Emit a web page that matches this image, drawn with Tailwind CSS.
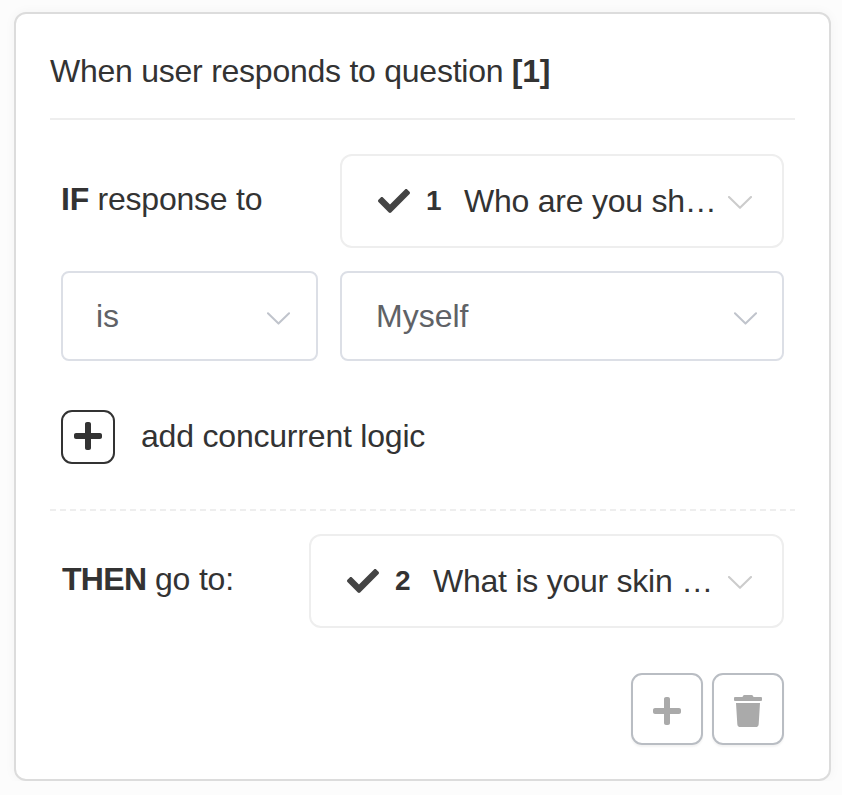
<!DOCTYPE html>
<html lang="en">
<head>
<meta charset="utf-8">
<title>Question logic</title>
<script src="https://cdn.jsdelivr.net/npm/@tailwindcss/browser@4"></script>
</head>
<body class="bg-[#fcfcfc] font-['Liberation_Sans',Arial,sans-serif] text-[32px] leading-[40px] text-[#333333] overflow-hidden">
<svg class="hidden">
  <symbol id="check" viewBox="0 0 512 512"><path d="M173.898 439.404l-166.4-166.4c-9.997-9.997-9.997-26.206 0-36.204l36.203-36.204c9.997-9.998 26.207-9.998 36.204 0L192 312.69 432.095 72.596c9.997-9.997 26.207-9.997 36.204 0l36.203 36.204c9.997 9.997 9.997 26.206 0 36.204l-294.4 294.401c-9.998 9.997-26.207 9.997-36.204-.001z"/></symbol>
  <symbol id="plus" viewBox="0 0 448 512"><path d="M416 208H272V64c0-17.67-14.33-32-32-32h-32c-17.67 0-32 14.33-32 32v144H32c-17.67 0-32 14.33-32 32v32c0 17.67 14.33 32 32 32h144v144c0 17.67 14.33 32 32 32h32c17.67 0 32-14.33 32-32V304h144c17.67 0 32-14.33 32-32v-32c0-17.67-14.33-32-32-32z"/></symbol>
  <symbol id="trash" viewBox="0 0 448 512"><path d="M432 32H312l-9.4-18.7A24 24 0 0 0 281.1 0H166.8a23.72 23.72 0 0 0-21.4 13.3L136 32H16A16 16 0 0 0 0 48v32a16 16 0 0 0 16 16h416a16 16 0 0 0 16-16V48a16 16 0 0 0-16-16zM53.2 467a48 48 0 0 0 47.9 45h245.8a48 48 0 0 0 47.9-45L416 128H32z"/></symbol>
  <symbol id="chevron" viewBox="0 0 24 13"><path d="M1 1L12 11.8L23 1" fill="none" stroke="currentColor" stroke-width="2.1" stroke-linecap="round" stroke-linejoin="round"/></symbol>
</svg>
<main class="mt-3 ml-[14px] w-[817px] h-[769px] rounded-[12px] border-2 border-[#dcdcdc] bg-white px-[34px] shadow-[0_0_12px_rgba(0,0,0,0.04)]">
  <h1 class="h-[106px] border-b-2 border-[#eeeeee] pt-[37px] whitespace-nowrap tracking-[-0.25px]">When user responds to question <b>[1]</b></h1>

  <section class="h-[391px] pl-[11px] pr-[11px] pt-[34px]">
    <div class="flex justify-between">
      <div class="pt-[25px] tracking-[-0.24px]"><b>IF</b> response to</div>
      <div class="flex h-[94px] w-[444px] items-center rounded-[12px] border-2 border-[#eeeeee] pl-9 pr-[30px] whitespace-nowrap">
        <svg class="size-8 fill-[#444444]"><use href="#check"/></svg>
        <b class="ml-4 w-[38px] text-[28px]">1</b>
        <span class="tracking-[-0.24px]">Who are you sh…</span>
        <svg class="ml-auto mt-[3px] h-[13px] w-6 text-[#cccccc]"><use href="#chevron"/></svg>
      </div>
    </div>
    <div class="mt-[23px] flex justify-between text-[#606266]">
      <div class="flex h-[90px] w-[257px] items-center justify-between rounded-[8px] border-2 border-[#dcdfe6] pl-[33px] pr-[26px]">
        <span>is</span>
        <svg class="mt-[5px] h-[13px] w-[23px] text-[#c0c4cc]"><use href="#chevron"/></svg>
      </div>
      <div class="flex h-[90px] w-[444px] items-center justify-between rounded-[8px] border-2 border-[#dcdfe6] pl-[34px] pr-[25px]">
        <span>Myself</span>
        <svg class="mt-[5px] h-[13px] w-[23px] text-[#c0c4cc]"><use href="#chevron"/></svg>
      </div>
    </div>
    <div class="mt-[49px] flex items-center gap-[26px]">
      <button class="flex h-[54px] w-[54px] items-center justify-center rounded-[11px] border-2 border-[#333333] pb-[3px]"><svg class="h-8 w-7 fill-[#333333]"><use href="#plus"/></svg></button>
      <span class="pb-[2px] tracking-[-0.2px]">add concurrent logic</span>
    </div>
  </section>

  <svg class="-mt-[2px] block h-[2px] w-full"><line x1="0" y1="1" x2="745" y2="1" stroke="#eeeeee" stroke-width="2" stroke-dasharray="6 4"/></svg>

  <section class="px-[11px] pt-[23px]">
    <div class="flex justify-between">
      <div class="pt-[25px] pl-[1px] tracking-[-0.2px]"><b class="tracking-[-0.7px]">THEN</b> go to:</div>
      <div class="flex h-[94px] w-[475px] items-center rounded-[12px] border-2 border-[#eeeeee] pl-9 pr-[30px] whitespace-nowrap">
        <svg class="size-8 fill-[#444444]"><use href="#check"/></svg>
        <b class="ml-4 w-[38px] text-[28px]">2</b>
        <span class="tracking-[-0.24px]">What is your skin …</span>
        <svg class="ml-auto mt-[3px] h-[13px] w-6 text-[#cccccc]"><use href="#chevron"/></svg>
      </div>
    </div>
    <div class="mt-[45px] flex justify-end gap-[9px]">
      <button class="flex size-[72px] items-center justify-center rounded-[11px] border-2 border-[#b9bdc3] pt-[3px] shadow-[0_2px_2px_rgba(0,0,0,0.05)]"><svg class="h-8 w-7 fill-[#aaaaaa]"><use href="#plus"/></svg></button>
      <button class="flex size-[72px] items-center justify-center rounded-[11px] border-2 border-[#b9bdc3] pt-[3px] shadow-[0_2px_2px_rgba(0,0,0,0.05)]"><svg class="h-8 w-7 fill-[#aaaaaa]"><use href="#trash"/></svg></button>
    </div>
  </section>
</main>
</body>
</html>
